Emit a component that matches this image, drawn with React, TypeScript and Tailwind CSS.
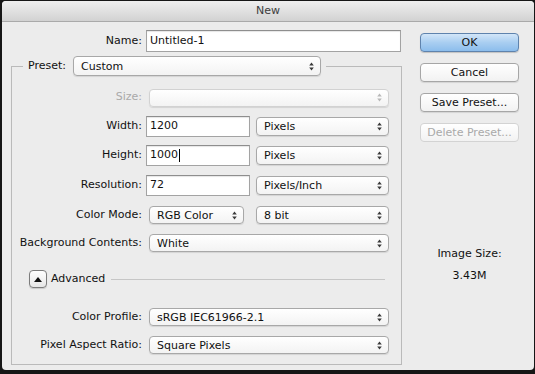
import React from "react";

function Arrows({ disabled }: { disabled?: boolean }) {
  return (
    <svg width="5" height="9" viewBox="0 0 5 9" className="shrink-0">
      <path d="M0.2 3.6L2.5 0.4L4.8 3.6Z M0.2 5.4L2.5 8.6L4.8 5.4Z" fill={disabled ? "#b8b8b8" : "#3a3a3a"} />
    </svg>
  );
}

function Popup({
  text,
  className = "",
  disabled,
}: {
  text?: string;
  className?: string;
  disabled?: boolean;
}) {
  return (
    <div
      className={`flex items-center justify-between rounded-[4px] border bg-linear-to-b from-white to-[#f3f3f3] pl-[7px] pr-[6px] shadow-[0_1px_1px_rgba(0,0,0,0.10)] ${
        disabled ? "border-[#d2d2d2]" : "border-[#a8a8a8]"
      } ${className}`}
    >
      <span className="leading-none">{text}</span>
      <Arrows disabled={disabled} />
    </div>
  );
}

function TextBox({ children, className = "" }: { children?: React.ReactNode; className?: string }) {
  return (
    <div
      className={`flex h-[21px] items-center border border-[#a3a3a3] border-t-[#8e8e8e] bg-white pl-[3px] shadow-[inset_0_1px_1px_rgba(0,0,0,0.10)] ${className}`}
    >
      {children}
    </div>
  );
}

function Button({
  children,
  primary,
  disabled,
}: {
  children: React.ReactNode;
  primary?: boolean;
  disabled?: boolean;
}) {
  const base =
    "flex h-[19px] w-[99px] items-center justify-center rounded-[4px] border leading-none";
  if (primary)
    return (
      <div
        className={`${base} border-[#5f83ad] bg-linear-to-b from-[#d3e6f8] via-[#a9cef1] to-[#8cbdec] text-[#111] shadow-[0_1px_1px_rgba(0,0,0,0.18)]`}
      >
        {children}
      </div>
    );
  return (
    <div
      className={`${base} bg-linear-to-b from-white to-[#f2f2f2] ${
        disabled
          ? "border-[#d3d3d3] text-[#a9a9a9]"
          : "border-[#a6a6a6] text-[#111] shadow-[0_1px_1px_rgba(0,0,0,0.10)]"
      }`}
    >
      {children}
    </div>
  );
}

function Row({
  label,
  h,
  disabled,
  children,
}: {
  label: string;
  h: string;
  disabled?: boolean;
  children: React.ReactNode;
}) {
  return (
    <div className={`flex items-center ${h}`}>
      <div className={`w-[130px] shrink-0 text-right ${disabled ? "text-[#a9a9a9]" : ""}`}>{label}</div>
      {children}
    </div>
  );
}

export default function App() {
  return (
    <div className="h-[374px] w-[535px] bg-[#161616] pb-[4px] pl-[2px] pr-[1px] pt-[1px] font-['DejaVu_Sans',sans-serif] text-[11px] text-[#111]">
      <div className="flex h-full flex-col overflow-hidden rounded-[4px] bg-[#ececec]">
        {/* title bar */}
        <div className="flex h-[21px] shrink-0 items-center justify-center border-b border-[#aaaaaa] bg-linear-to-b from-[#efefef] to-[#d2d2d2] text-[#3d3d3d]">
          New
        </div>

        <div className="flex">
          {/* left column */}
          <div className="w-[400px] shrink-0">
            {/* Name */}
            <div className="mt-[8px] flex h-[22px] items-center">
              <div className="w-[140px] shrink-0 text-right">Name:</div>
              <TextBox className="ml-[4px] h-[22px] w-[255px]">Untitled-1</TextBox>
            </div>

            {/* Preset fieldset */}
            <fieldset className="ml-[9px] mt-[4px] w-[391px] border border-[#bababa] pb-[6px]">
              <legend className="ml-[11px] px-[5px]">
                <div className="flex items-center">
                  <span>Preset:</span>
                  <Popup text="Custom" className="ml-[7px] h-[20px] w-[248px]" />
                </div>
              </legend>

              <div className="pt-[7px]">
                <Row label="Size:" h="h-[29px]" disabled>
                  <Popup disabled className="ml-[7px] h-[18px] w-[240px]" />
                </Row>
                <Row label="Width:" h="h-[28px]">
                  <TextBox className="ml-[4px] w-[104px]">1200</TextBox>
                  <Popup text="Pixels" className="ml-[6px] h-[19px] w-[133px]" />
                </Row>
                <Row label="Height:" h="h-[30px]">
                  <TextBox className="ml-[4px] w-[104px]">
                    1000
                    <span className="ml-px inline-block h-[13px] w-px bg-black" />
                  </TextBox>
                  <Popup text="Pixels" className="ml-[6px] h-[19px] w-[133px]" />
                </Row>
                <Row label="Resolution:" h="h-[30px]">
                  <TextBox className="ml-[4px] w-[104px]">72</TextBox>
                  <Popup text="Pixels/Inch" className="ml-[6px] h-[19px] w-[133px]" />
                </Row>
                <Row label="Color Mode:" h="h-[30px]">
                  <Popup text="RGB Color" className="ml-[7px] h-[18px] w-[95px]" />
                  <Popup text="8 bit" className="ml-[12px] h-[18px] w-[133px]" />
                </Row>
                <Row label="Background Contents:" h="h-[26px]">
                  <Popup text="White" className="ml-[7px] h-[18px] w-[240px]" />
                </Row>

                {/* Advanced */}
                <div className="flex h-[46px] items-center pl-[17px] pr-[16px]">
                  <div className="flex h-[18px] w-[18px] shrink-0 items-center justify-center rounded-[4px] border border-[#7c7c7c] bg-linear-to-b from-white to-[#e6e6e6] shadow-[0_1px_1px_rgba(0,0,0,0.15)]">
                    <svg width="8" height="5" viewBox="0 0 8 5">
                      <path d="M0 5L4 0L8 5Z" fill="#111" />
                    </svg>
                  </div>
                  <span className="ml-[4px]">Advanced</span>
                  <div className="ml-[6px] h-px flex-1 bg-[#c6c6c6]" />
                </div>

                <Row label="Color Profile:" h="h-[30px]">
                  <Popup text="sRGB IEC61966-2.1" className="ml-[7px] h-[18px] w-[240px]" />
                </Row>
                <Row label="Pixel Aspect Ratio:" h="h-[26px]">
                  <Popup text="Square Pixels" className="ml-[7px] h-[18px] w-[240px]" />
                </Row>
              </div>
            </fieldset>
          </div>

          {/* right column */}
          <div className="ml-[18px] flex w-[99px] flex-col">
            <div className="mt-[11px] flex flex-col gap-[11px]">
              <Button primary>OK</Button>
              <Button>Cancel</Button>
              <Button>Save Preset...</Button>
              <Button disabled>Delete Preset...</Button>
            </div>
            <div className="mt-[105px] text-center leading-[14px]">Image Size:</div>
            <div className="mt-[8px] text-center leading-[14px]">3.43M</div>
          </div>
        </div>
      </div>
    </div>
  );
}
